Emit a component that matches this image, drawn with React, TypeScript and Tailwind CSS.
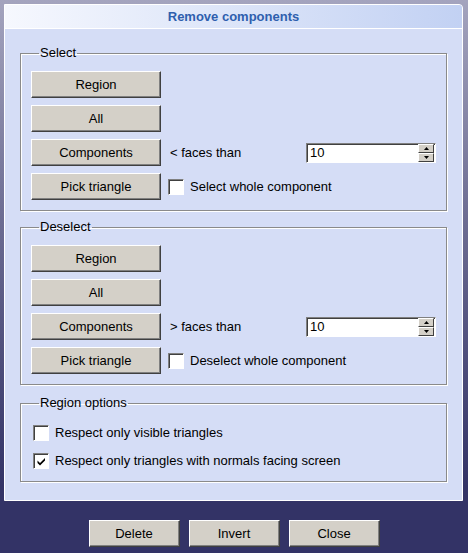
import React from 'react'

const font = { fontFamily: '"Liberation Sans", Arial, sans-serif' }

function WinButton({ label, className = '' }: { label: string; className?: string }) {
  return (
    <button
      className={`h-[27px] bg-[#d4d0c8] text-[13px] text-black border border-t-white border-l-white border-r-[#404040] border-b-[#404040] shadow-[inset_-1px_-1px_0_#808080] ${className}`}
    >
      {label}
    </button>
  )
}

function Check({ checked = false }: { checked?: boolean }) {
  return (
    <span className="w-[16px] h-[16px] shrink-0 bg-white border border-t-[#808080] border-l-[#808080] border-r-white border-b-white shadow-[inset_1px_1px_0_#404040] flex items-center justify-center">
      {checked && (
        <svg width="9" height="9" viewBox="0 0 9 9">
          <path d="M0.5 3.5 L3 6 L8 1 L8 3.5 L3 8.5 L0.5 6 Z" fill="#000" />
        </svg>
      )}
    </span>
  )
}

function SpinBox({ value }: { value: string }) {
  return (
    <div className="w-[130px] h-[20px] bg-white border border-t-[#808080] border-l-[#808080] border-r-white border-b-white shadow-[inset_1px_1px_0_#404040] flex items-center">
      <span className="flex-1 pl-[3px] text-[13px] leading-none">{value}</span>
      <div className="flex flex-col w-[16px] h-[18px] mr-[1px]">
        <span className="flex-1 bg-[#d4d0c8] border border-t-white border-l-white border-r-[#404040] border-b-[#404040] flex items-center justify-center">
          <svg width="5" height="3" viewBox="0 0 5 3"><path d="M2.5 0 L5 3 L0 3 Z" fill="#000" /></svg>
        </span>
        <span className="flex-1 bg-[#d4d0c8] border border-t-white border-l-white border-r-[#404040] border-b-[#404040] flex items-center justify-center">
          <svg width="5" height="3" viewBox="0 0 5 3"><path d="M0 0 L5 0 L2.5 3 Z" fill="#000" /></svg>
        </span>
      </div>
    </div>
  )
}

function Group({ title, children, className = '' }: { title: string; children: React.ReactNode; className?: string }) {
  return (
    <fieldset className={`border border-[#8a8a8a] shadow-[1px_1px_0_white,inset_1px_1px_0_white] px-[10px] pb-[10px] ${className}`}>
      <legend className="ml-[8px] px-[1px] text-[13px] leading-4 text-black">{title}</legend>
      {children}
    </fieldset>
  )
}

function SelectBlock({ sign, check }: { sign: string; check: string }) {
  return (
    <div className="flex flex-col gap-[7px] pt-[10px]">
      <WinButton label="Region" className="w-[130px]" />
      <WinButton label="All" className="w-[130px]" />
      <div className="flex items-center">
        <WinButton label="Components" className="w-[130px]" />
        <span className="ml-[9px] text-[13px] w-[136px]">{sign} faces than</span>
        <SpinBox value="10" />
      </div>
      <div className="flex items-center">
        <WinButton label="Pick triangle" className="w-[130px]" />
        <span className="ml-[7px]"><Check /></span>
        <span className="ml-[6px] text-[13px]">{check}</span>
      </div>
    </div>
  )
}

export default function App() {
  return (
    <div
      className="w-[468px] h-[553px] bg-[linear-gradient(to_bottom,#a4a4be_0%,#6c6c92_40%,#333366_88%)] pt-[4px] pl-[4px] overflow-hidden"
      style={font}
    >
      {/* Dialog panel */}
      <div className="w-[459px] h-[497px] border border-white rounded-tr-[4px] bg-[#d5ddf6] flex flex-col">
        <div className="h-[24px] border-b border-white bg-[linear-gradient(to_right,#f6f8fe,#c2d1f3)] flex items-center justify-center rounded-tr-[3px]">
          <span className="text-[13px] font-bold text-[#2f5fae]">Remove components</span>
        </div>

        <div className="px-[15px] pt-[16px] flex flex-col">
          <Group title="Select">
            <SelectBlock sign="<" check="Select whole component" />
          </Group>
          <Group title="Deselect" className="mt-[8px]">
            <SelectBlock sign=">" check="Deselect whole component" />
          </Group>
          <Group title="Region options" className="mt-[10px] pb-[12px]">
            <div className="flex flex-col gap-[12px] pt-[14px] pl-[2px]">
              <label className="flex items-center gap-[6px] text-[13px] leading-4">
                <Check />
                Respect only visible triangles
              </label>
              <label className="flex items-center gap-[6px] text-[13px] leading-4">
                <Check checked />
                Respect only triangles with normals facing screen
              </label>
            </div>
          </Group>
        </div>
      </div>

      {/* Bottom buttons */}
      <div className="flex justify-center gap-[9px] mt-[19px] pr-[4px]">
        <WinButton label="Delete" className="w-[91px]" />
        <WinButton label="Invert" className="w-[91px]" />
        <WinButton label="Close" className="w-[91px]" />
      </div>
    </div>
  )
}
